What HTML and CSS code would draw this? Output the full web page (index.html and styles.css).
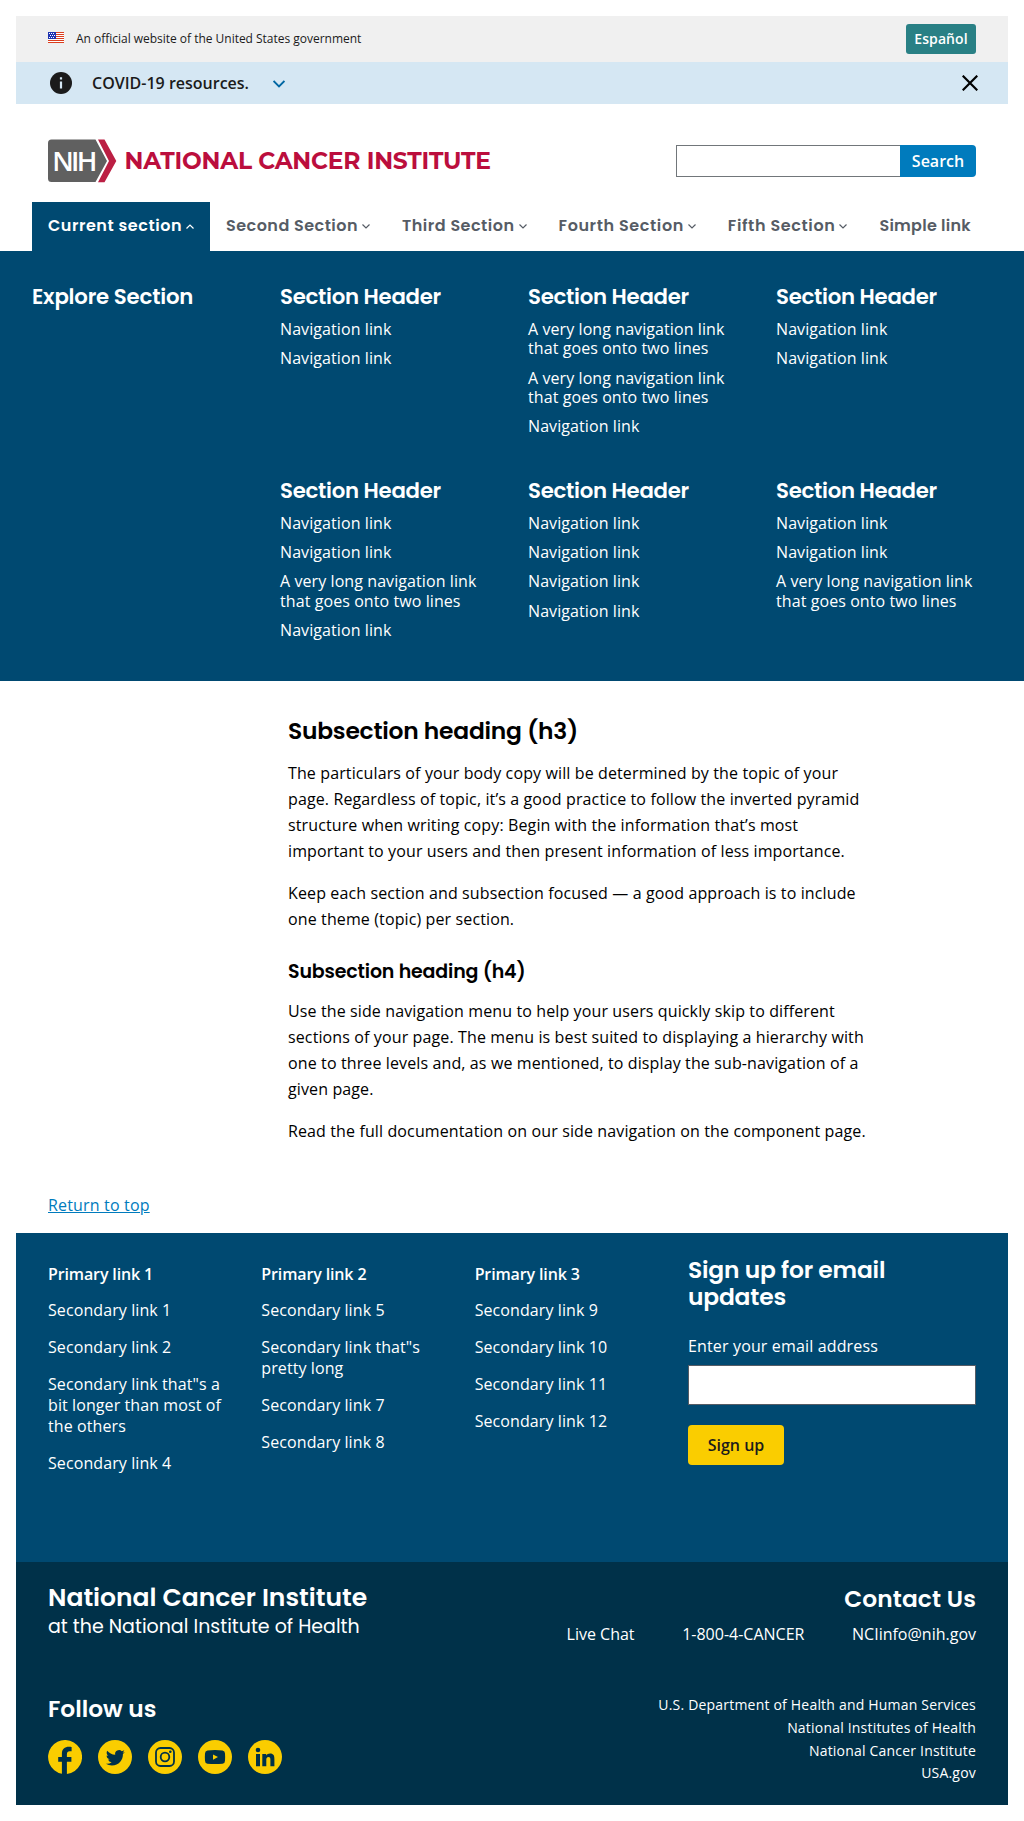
FILE: index.html
```html
<!DOCTYPE html>
<html lang="en">
<head>
<meta charset="utf-8">
<title>National Cancer Institute</title>
<link rel="stylesheet" href="styles.css">
</head>
<body>
<div class="banner">
  <div class="banner-label">
    <svg class="flag" viewBox="0 0 16 11" shape-rendering="crispEdges"><rect width="16" height="11" fill="#fff"/><path d="M0 .5h16M0 2.500h16M0 4.500h16M0 6.500h16M0 8.500h16M0 10.500h16" stroke="#db3e1f"/><rect width="8" height="7" fill="#1e33b1"/><path d="M1 1.500h1M3 1.500h1M5 1.500h1M2 3.500h1M4 3.500h1M6 3.500h1M1 5.500h1M3 5.500h1M5 5.500h1" stroke="#fff"/></svg>
    <span>An official website of the United States government</span>
  </div>
  <a class="lang">Español</a>
</div>
<div class="alert">
  <svg class="info" viewBox="0 0 22 22"><circle cx="11" cy="11" r="11" fill="#1b1b1b"/><path d="M9.900 5.200h2.200v2.200H9.900zM9.900 9.600h2.200v7H9.900z" fill="#d5e7f3"/></svg>
  <span class="alert-text">COVID-19 resources.</span>
  <svg class="alert-arrow" viewBox="0 0 12 8"><path d="M.6 1 6 6.400 11.400 1" fill="none" stroke="#0067a3" stroke-width="1.800"/></svg>
  <svg class="close" viewBox="0 0 16 16"><path d="M.7.7l14.600 14.600M15.300.7.7 15.300" stroke="#000" stroke-width="2.200"/></svg>
</div>
<header class="masthead">
  <div class="logo">
    <svg class="nih" viewBox="0 0 69 44"><path d="M3.500.5H47.500L59 22 47.500 43H3.500A3.500 3.500 0 0 1 0 39.500V4A3.500 3.500 0 0 1 3.500.5z" fill="#606060"/><path d="M50 .5h6.500L68.300 22 56.500 43.300H50L61 22z" fill="#bb1f43"/><text x="4.300" y="31.500" textLength="45" class="nih-text">NIH</text></svg>
    <span class="logo-name">NATIONAL CANCER INSTITUTE</span>
  </div>
  <form class="search"><input class="search-field" aria-label="Search"><button class="search-btn" type="button">Search</button></form>
</header>
<nav class="mainnav">
  <a class="nav-item current"><span>Current section</span><svg class="caret" viewBox="0 0 8 5"><path d="M.5 4.500 4 1l3.500 3.500" fill="none" stroke="currentColor" stroke-width="1.200"/></svg></a>
  <a class="nav-item second"><span>Second Section</span><svg class="caret" viewBox="0 0 8 5"><path d="M.5.5 4 4 7.500.5" fill="none" stroke="currentColor" stroke-width="1.200"/></svg></a>
  <a class="nav-item third"><span>Third Section</span><svg class="caret" viewBox="0 0 8 5"><path d="M.5.5 4 4 7.500.5" fill="none" stroke="currentColor" stroke-width="1.200"/></svg></a>
  <a class="nav-item fourth"><span>Fourth Section</span><svg class="caret" viewBox="0 0 8 5"><path d="M.5.5 4 4 7.500.5" fill="none" stroke="currentColor" stroke-width="1.200"/></svg></a>
  <a class="nav-item fifth"><span>Fifth Section</span><svg class="caret" viewBox="0 0 8 5"><path d="M.5.5 4 4 7.500.5" fill="none" stroke="currentColor" stroke-width="1.200"/></svg></a>
  <a class="nav-item simple"><span>Simple link</span></a>
</nav>
<section class="mega">
  <h2 class="mega-head explore">Explore Section</h2>
  <div><h3 class="mega-head">Section Header</h3><ul class="mega-list"><li>Navigation link</li><li>Navigation link</li></ul></div>
  <div><h3 class="mega-head">Section Header</h3><ul class="mega-list"><li>A very long navigation link that goes onto two lines</li><li>A very long navigation link that goes onto two lines</li><li>Navigation link</li></ul></div>
  <div><h3 class="mega-head">Section Header</h3><ul class="mega-list"><li>Navigation link</li><li>Navigation link</li></ul></div>
  <div><h3 class="mega-head">Section Header</h3><ul class="mega-list"><li>Navigation link</li><li>Navigation link</li><li>A very long navigation link that goes onto two lines</li><li>Navigation link</li></ul></div>
  <div><h3 class="mega-head">Section Header</h3><ul class="mega-list"><li>Navigation link</li><li>Navigation link</li><li>Navigation link</li><li>Navigation link</li></ul></div>
  <div><h3 class="mega-head">Section Header</h3><ul class="mega-list"><li>Navigation link</li><li>Navigation link</li><li>A very long navigation link that goes onto two lines</li></ul></div>
</section>
<main class="content">
  <h3 class="h3">Subsection heading (h3)</h3>
  <p>The particulars of your body copy will be determined by the topic of your page. Regardless of topic, it’s a good practice to follow the inverted pyramid structure when writing copy: Begin with the information that’s most important to your users and then present information of less importance.</p>
  <p>Keep each section and subsection focused — a good approach is to include one theme (topic) per section.</p>
  <h4 class="h4">Subsection heading (h4)</h4>
  <p>Use the side navigation menu to help your users quickly skip to different sections of your page. The menu is best suited to displaying a hierarchy with one to three levels and, as we mentioned, to display the sub-navigation of a given page.</p>
  <p>Read the full documentation on our side navigation on the component page.</p>
</main>
<div class="return"><a class="return-link">Return to top</a></div>
<footer>
  <div class="foot-main">
    <ul class="foot-col"><li class="primary">Primary link 1</li><li>Secondary link 1</li><li>Secondary link 2</li><li>Secondary link that"s a bit longer than most of the others</li><li>Secondary link 4</li></ul>
    <ul class="foot-col"><li class="primary">Primary link 2</li><li>Secondary link 5</li><li>Secondary link that"s pretty long</li><li>Secondary link 7</li><li>Secondary link 8</li></ul>
    <ul class="foot-col"><li class="primary">Primary link 3</li><li>Secondary link 9</li><li>Secondary link 10</li><li>Secondary link 11</li><li>Secondary link 12</li></ul>
    <form class="signup">
      <h3 class="signup-head">Sign up for email updates</h3>
      <label class="signup-label" for="email">Enter your email address</label>
      <input class="signup-field" id="email">
      <button class="signup-btn" type="button">Sign up</button>
    </form>
  </div>
  <div class="foot-bottom">
    <div class="foot-left">
      <div class="org">National Cancer Institute</div>
      <div class="org-sub">at the National Institute of Health</div>
      <h3 class="foot-head follow">Follow us</h3>
      <div class="social">
        <svg viewBox="0 0 34 34"><path fill="#facd00" d="M13.900 33.700A17 17 0 1 1 18.900 33.900V21.700h4.500V17h-4.500v-2.600c0-2.300.9-3.200 2.800-3.200h1.900V7c-.9-.2-1.800-.2-2.600-.2-4.300 0-7.100 2.400-7.100 6.700V17h-3.700v4.700h3.700z"/></svg>
        <svg viewBox="0 0 34 34"><circle cx="17" cy="17" r="17" fill="#facd00"/><path transform="translate(7.900 8.300) scale(.79)" fill="#003149" d="M23.953 4.570a10 10 0 0 1-2.825.775 4.958 4.958 0 0 0 2.163-2.723c-.951.555-2.005.959-3.127 1.184a4.920 4.920 0 0 0-8.384 4.482C7.690 8.095 4.067 6.130 1.640 3.162a4.822 4.822 0 0 0-.666 2.475c0 1.710.87 3.213 2.188 4.096a4.904 4.904 0 0 1-2.228-.616v.06a4.923 4.923 0 0 0 3.946 4.827 4.996 4.996 0 0 1-2.212.085 4.936 4.936 0 0 0 4.604 3.417 9.867 9.867 0 0 1-6.102 2.105c-.39 0-.779-.023-1.170-.067a13.995 13.995 0 0 0 7.557 2.209c9.053 0 13.998-7.496 13.998-13.985 0-.21 0-.42-.015-.63A9.935 9.935 0 0 0 24 4.590z"/></svg>
        <svg viewBox="0 0 34 34"><circle cx="17" cy="17" r="17" fill="#facd00"/><g fill="none" stroke="#003149" stroke-width="1.800"><rect x="8" y="8" width="18" height="18" rx="4.500"/><circle cx="17" cy="17" r="4.300"/></g><circle cx="22.300" cy="11.700" r="1.300" fill="#003149"/></svg>
        <svg viewBox="0 0 34 34"><circle cx="17" cy="17" r="17" fill="#facd00"/><path fill="#003149" d="M9.500 10.400q7.500-.8 15 0 2.500.3 2.500 3 .3 3.600 0 7.300 0 2.700-2.500 3-7.500.8-15 0-2.500-.3-2.500-3-.3-3.700 0-7.300 0-2.700 2.500-3z"/><path fill="#facd00" d="M15 14.400v5.400l5-2.700z"/></svg>
        <svg viewBox="0 0 34 34"><circle cx="17" cy="17" r="17" fill="#facd00"/><g fill="#003149"><circle cx="10" cy="10" r="2.300"/><path d="M8 13.900h4V26.300H8zM14.300 13.900h3.900v1.700c.7-1.200 2-2 3.900-2 3.500 0 4.300 2.300 4.300 5.500v7.200h-4v-6.400c0-1.600-.1-3-1.900-3s-2.200 1.400-2.200 2.900v6.500h-4z"/></g></svg>
      </div>
    </div>
    <div class="foot-right">
      <h3 class="foot-head contact">Contact Us</h3>
      <div class="contact-links"><a>Live Chat</a><a>1-800-4-CANCER</a><a>NCIinfo@nih.gov</a></div>
      <div class="agencies">U.S. Department of Health and Human Services<br>National Institutes of Health<br>National Cancer Institute<br>USA.gov</div>
    </div>
  </div>
</footer>
</body>
</html>
```
FILE: styles.css
```css
*{box-sizing:border-box}
body{margin:0;padding:16px 0;background:#fff;color:#000;font:16px/26px "Open Sans",sans-serif}
h2,h3,h4,p,ul{margin:0;padding:0;list-style:none}
svg{display:block;flex:none}
input,button{font:inherit;margin:0}
.nav-item,.mega-head,.h3,.h4,.signup-head,.foot-head,.org,.org-sub{font-family:Poppins,Inter,sans-serif;font-weight:600}
.banner{display:flex;align-items:center;justify-content:space-between;height:46px;margin:0 16px;padding:0 32px;background:#f0f0f0}
.banner-label{display:flex;align-items:center;gap:12px;font-size:12px;letter-spacing:-.02px;color:#1b1b1b}
.flag{width:16px;height:11px;margin-top:-3px}
.lang{width:70px;height:30px;border-radius:3px;background:#298085;color:#fff;font-size:14px;font-weight:600;letter-spacing:.1px;line-height:30px;text-align:center}
.alert{display:flex;align-items:center;height:42px;margin:0 16px;padding:0 30px 0 34px;background:#d5e7f3}
.info{width:22px;height:22px}
.alert-text{margin-left:20px;color:#1b1b1b;font-weight:600}
.alert-arrow{width:12px;height:8px;margin:1px auto 0 24px}
.close{width:16px;height:16px}
.masthead{display:flex;align-items:center;justify-content:space-between;height:98px;padding:16px 48px 0}
.logo{display:flex;align-items:center;gap:7.6px}
.nih{width:69px;height:44px}
.nih-text{fill:#fff;font-family:"Open Sans",sans-serif;font-size:27.5px;font-weight:600}
.logo-name{color:#bb0e3d;font-family:Montserrat,Poppins,sans-serif;font-size:23.4px;font-weight:700;letter-spacing:-.2px}
.search{display:flex;height:32px}
.search-field{width:224px;border:1px solid #71767a;border-right:0;background:#fff}
.search-btn{width:76px;padding:0;border:0;border-radius:0 4px 4px 0;background:#007bbd;color:#fff;font-weight:600}
.mainnav{display:flex;height:49px;padding:0 32px}
.nav-item{display:flex;align-items:center;gap:4px;padding:0 16px 2px;color:#565c65;font-size:16px;white-space:nowrap}
.nav-item.current{background:#004971;color:#fff;letter-spacing:.54px}
.second{letter-spacing:.47px}
.third{letter-spacing:.5px}
.fourth{letter-spacing:.59px}
.fifth{letter-spacing:.6px}
.simple{letter-spacing:.25px}
.caret{width:8px;height:5px;margin-top:1px}
.mega{display:grid;grid-template-columns:repeat(4,200px);column-gap:48px;row-gap:40.7px;padding:32px 32px 40.9px;background:#004971;color:#fff}
.mega>*{min-width:0}
.mega-head{font-size:21.28px;line-height:26px;padding-top:.9px;letter-spacing:-.27px}
.explore{grid-row:span 2;letter-spacing:-.2px}
.mega-list{display:grid;gap:10px;margin-top:10.3px;line-height:19.2px;letter-spacing:.08px}
.content{width:584px;margin-left:288px;padding-top:36px;box-sizing:content-box;letter-spacing:.12px}
.content p{margin-bottom:16px}
.h3{font-size:23.4px;line-height:28px;margin-bottom:15px;letter-spacing:-.23px}
.h4{font-size:19px;line-height:24px;margin:28px 0 14px;letter-spacing:-.16px}
.return{padding:32px 48px 15px}
.return-link{color:#007bbd;text-decoration:underline;letter-spacing:.17px}
footer{margin:0 16px;color:#fff}
.foot-main{display:grid;grid-template-columns:181.33px 181.33px 181.33px 288px;column-gap:32px;height:329px;padding:24px 32px 0;background:#004971}
.foot-col{padding-top:1px;line-height:21px;letter-spacing:.09px}
.foot-col li{margin-bottom:16px}
.foot-col .primary{margin:6px 0 15px;font-weight:600;letter-spacing:-.13px}
.signup-head{width:240px;margin-top:-1px;font-size:23.4px;line-height:27px;letter-spacing:-.18px}
.signup-label{display:block;margin-top:23px;letter-spacing:.15px}
.signup-field{display:block;width:288px;height:40px;margin-top:6px;border:1px solid #565c65;background:#fff}
.signup-btn{display:block;width:96px;height:40px;margin-top:20px;padding:0;border:0;border-radius:4px;background:#facd00;color:#1b1b1b;font-weight:600}
.foot-bottom{display:flex;justify-content:space-between;height:243px;padding:21px 32px 0;background:#003149}
.org{margin-top:1px;font-size:25.05px;line-height:28px}
.org-sub{margin-top:1px;font-size:19px;line-height:28px;font-weight:400}
.foot-head{font-size:23.3px;line-height:28px}
.follow{margin-top:54px}
.social{display:flex;gap:16px;margin-top:17px}
.social svg{width:34px;height:34px}
.foot-right{text-align:right}
.contact{margin-top:2px;letter-spacing:.12px}
.contact-links{display:flex;gap:47.6px;margin-top:8px}
.agencies{margin-top:47.2px;font-size:14px;line-height:22.75px;letter-spacing:.2px}
```
